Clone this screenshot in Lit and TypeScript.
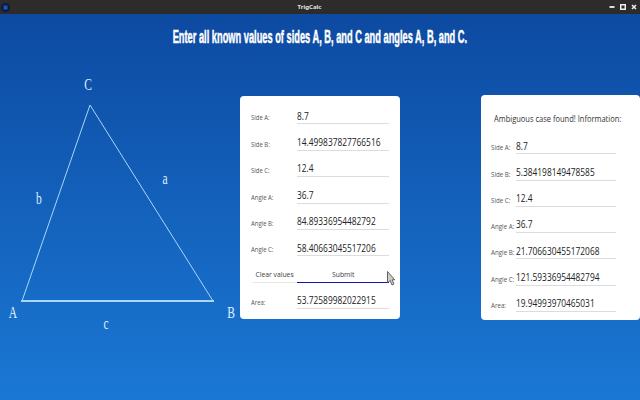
import { LitElement, html, css } from "lit";
import { customElement } from "lit/decorators.js";

const LEFT = [
  ["Side A:", "8.7"],
  ["Side B:", "14.499837827766516"],
  ["Side C:", "12.4"],
  ["Angle A:", "36.7"],
  ["Angle B:", "84.89336954482792"],
  ["Angle C:", "58.40663045517206"],
];
const RIGHT = [
  ["Side A:", "8.7"],
  ["Side B:", "5.384198149478585"],
  ["Side C:", "12.4"],
  ["Angle A:", "36.7"],
  ["Angle B:", "21.706630455172068"],
  ["Angle C:", "121.59336954482794"],
  ["Area:", "19.94993970465031"],
];

@customElement("app-root")
export class AppRoot extends LitElement {
  static styles = css`
    :host {
      display: flex;
      flex-direction: column;
      width: 640px;
      height: 400px;
      overflow: hidden;
      position: relative;
      font-family: "Open Sans", "Noto Sans", sans-serif;
    }
    .titlebar {
      height: 14px;
      flex: none;
      background: #2e2b2b;
      display: flex;
      align-items: center;
      justify-content: space-between;
      padding: 0 3px 0 1px;
      position: relative;
    }
    .appicon { width: 9px; height: 9px; display: block; }
    .wintitle {
      position: absolute;
      left: 0;
      right: 21px;
      text-align: center;
      color: #e4e4e4;
      font: 700 6px "Noto Sans", sans-serif;
    }
    .winbtns { display: flex; gap: 5px; align-items: center; }
    .winbtns svg { width: 6px; height: 6px; display: block; }
    .stage {
      flex: 1;
      display: flex;
      flex-direction: column;
      background: linear-gradient(180deg, #0d4aa2 0%, #1a78d4 100%);
    }
    .heading {
      height: 60px;
      flex: none;
      box-sizing: border-box;
      padding-top: 12px;
      text-align: center;
      color: #fff;
      font: 700 18px/22px "Liberation Sans", sans-serif;
      white-space: nowrap;
    }
    .heading span {
      display: inline-block;
      transform: scaleX(0.515);
      -webkit-text-stroke: 0.5px #fff;
    }
    .row { display: flex; align-items: flex-start; }
    .diagram { width: 240px; height: 260px; flex: none; display: block; }
    .diagram line { stroke: #a9d6fb; stroke-width: 1; }
    .diagram line.base { stroke-width: 2; }
    .diagram text {
      fill: #dff0ff;
      font: 16px "Liberation Serif", serif;
      text-anchor: middle;
      transform-box: fill-box;
      transform-origin: center;
      transform: scaleX(0.72);
    }
    .card {
      background: #fff;
      border-radius: 4px;
      box-sizing: border-box;
      display: grid;
      color: #222;
    }
    .left {
      width: 160px;
      height: 223px;
      margin-top: 22px;
      padding: 2px 11px 0 11px;
      grid-template-columns: 46px 92px;
      grid-auto-rows: 26.4px;
    }
    .right {
      width: 159px;
      height: 225px;
      margin: 21px 0 0 81px;
      padding: 0 24px 0 10px;
      grid-template-columns: 25px 100px;
      grid-template-rows: 33px;
      grid-auto-rows: 26.3px;
    }
    .info {
      grid-column: 1 / -1;
      box-sizing: border-box;
      padding: 17px 0 0 3px;
      font-size: 9.4px;
      line-height: 14px;
      color: #333;
      white-space: nowrap;
    }
    .info span { display: inline-block; transform: scaleX(0.8); transform-origin: left; }
    .lbl {
      align-self: end;
      font-size: 7px;
      line-height: 10px;
      padding-bottom: 1px;
      color: #555;
      white-space: nowrap;
    }
    .lbl span { display: inline-block; transform: scaleX(0.85); transform-origin: left; }
    .right .lbl { font-size: 6.2px; padding-bottom: 1px; }
    .right .lbl span { transform: none; }
    .val {
      align-self: end;
      height: 19px;
      overflow: hidden;
      box-sizing: border-box;
      border-bottom: 1px solid #dcdcdc;
    }
    input {
      all: unset;
      box-sizing: border-box;
      display: block;
      width: 131%;
      height: 18px;
      padding-top: 1.5px;
      font-size: 11px;
      line-height: 16px;
      color: #222;
      transform: scaleX(0.76);
      transform-origin: left;
    }
    button {
      all: unset;
      box-sizing: border-box;
      align-self: end;
      height: 19px;
      font-size: 8px;
      line-height: 19px;
      color: #333;
      text-align: center;
      white-space: nowrap;
    }
    button span { display: inline-block; transform: scaleX(0.85); opacity: 0.95; }
    .clear { margin: 0 -1px 0 1px; border-bottom: 1px solid #e8e8e8; }
    .submit { border-bottom: 1px solid #1414a8; }
    .cursor { position: absolute; left: 387px; top: 271px; width: 8px; height: 15px; }
  `;

  private field(r: string[]) {
    return html`<div class="lbl"><span>${r[0]}</span></div>
      <div class="val"><input readonly .value=${r[1]} /></div>`;
  }

  render() {
    return html`
      <div class="titlebar">
        <svg class="appicon" viewBox="0 0 9 9">
          <circle cx="4.5" cy="4.5" r="4.5" fill="#0b1a44" />
          <rect x="2.5" y="2.5" width="4" height="4" fill="#1c56b8" />
        </svg>
        <div class="wintitle">TrigCalc</div>
        <div class="winbtns">
          <svg viewBox="0 0 6 6"><rect x="0.5" y="2" width="5" height="2" fill="#ddd" /></svg>
          <svg viewBox="0 0 6 6"><rect x="0.75" y="0.75" width="4.5" height="4.5" fill="none" stroke="#eee" stroke-width="1.5" /></svg>
          <svg viewBox="0 0 6 6"><path d="M1 1L5 5M5 1L1 5" stroke="#eee" stroke-width="1.5" /></svg>
        </div>
      </div>
      <div class="stage">
        <div class="heading"><span>Enter all known values of sides A, B, and C and angles A, B, and C.</span></div>
        <div class="row">
          <svg class="diagram" viewBox="0 74 240 260">
            <line x1="90" y1="105" x2="22" y2="301" />
            <line x1="90" y1="105" x2="213" y2="301" />
            <line class="base" x1="21" y1="301" x2="214" y2="301" />
            <text x="88" y="90">C</text>
            <text x="165" y="184">a</text>
            <text x="39" y="204">b</text>
            <text x="13" y="318">A</text>
            <text x="231" y="318">B</text>
            <text x="106" y="329">c</text>
          </svg>
          <div class="card left">
            ${LEFT.map((r) => this.field(r))}
            <button class="clear"><span>Clear values</span></button>
            <button class="submit"><span>Submit</span></button>
            ${this.field(["Area:", "53.72589982022915"])}
          </div>
          <div class="card right">
            <div class="info"><span>Ambiguous case found! Information:</span></div>
            ${RIGHT.map((r) => this.field(r))}
          </div>
        </div>
      </div>
      <svg class="cursor" viewBox="0 0 8 15">
        <path d="M0.5 0.5V12L3 9.5L5 14L7 13L5 8.8H7.8Z" fill="#ccc" stroke="#444" stroke-width="0.8" />
      </svg>
    `;
  }
}
